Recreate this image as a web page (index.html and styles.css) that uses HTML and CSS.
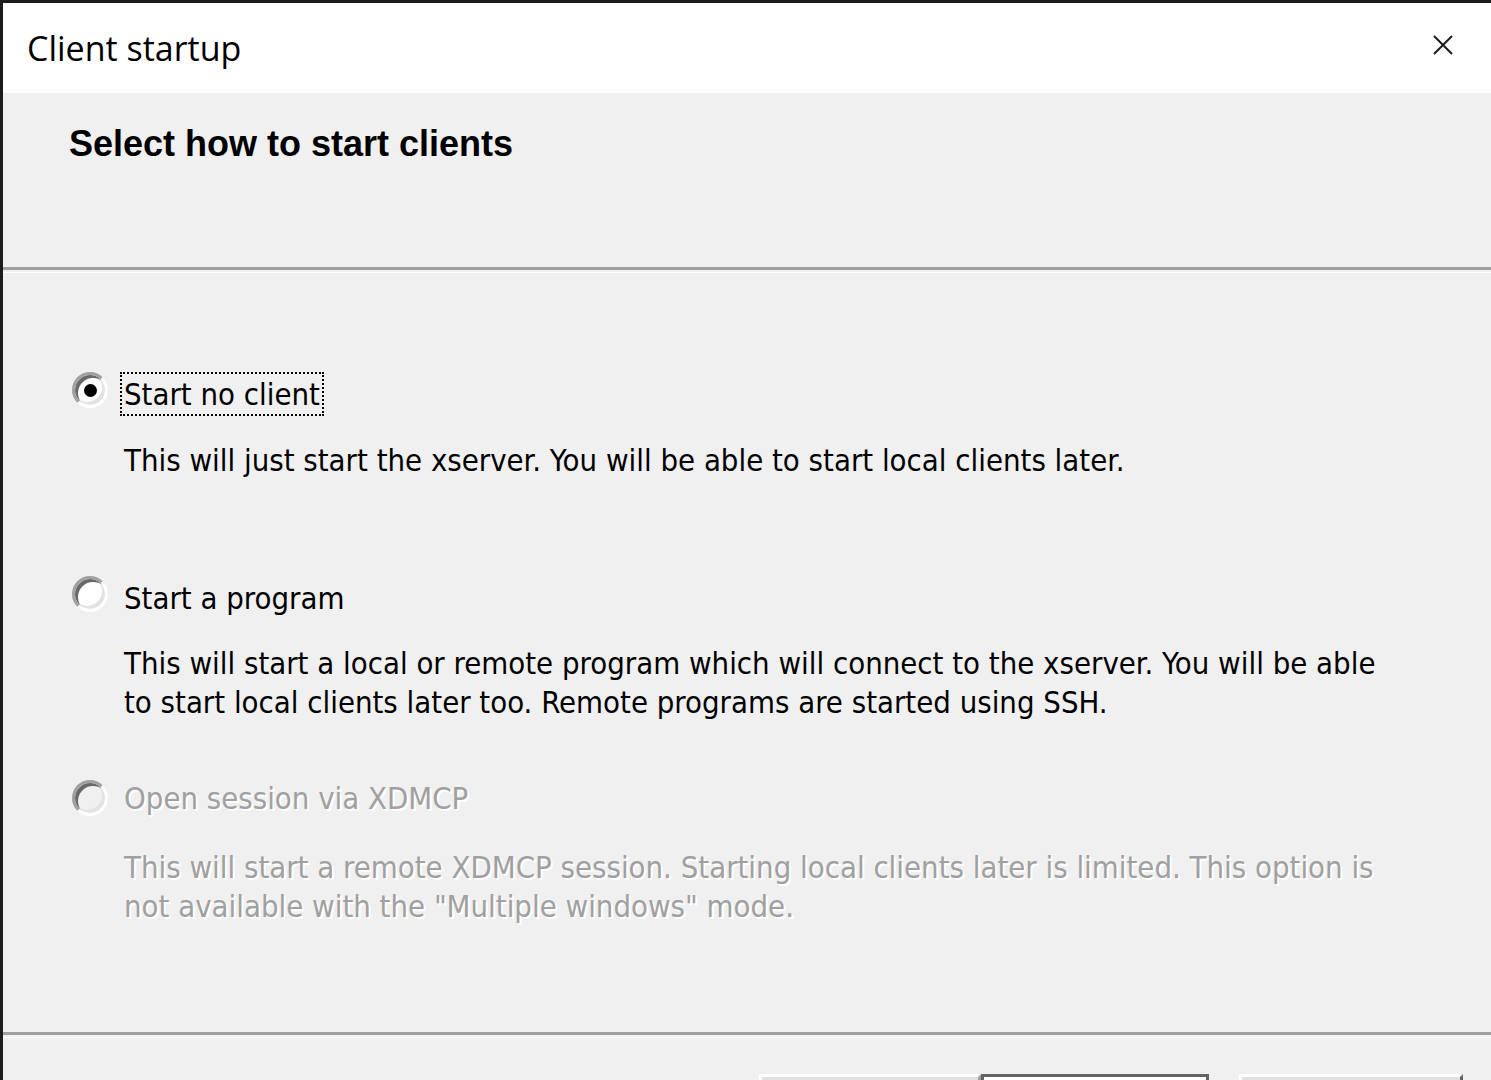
FILE: index.html
```html
<!DOCTYPE html>
<html>
<head>
<meta charset="utf-8">
<title>Client startup</title>
<link rel="stylesheet" href="styles.css">
</head>
<body>
<div class="window">
  <div class="titlebar">
    <span class="title">Client startup</span>
    <svg class="close" width="20" height="20" viewBox="0 0 20 20"><path d="M1 1 L19 19 M19 1 L1 19" stroke="#1b1b1b" stroke-width="2" fill="none"/></svg>
  </div>
  <div class="header">
    <div class="heading">Select how to start clients</div>
  </div>
  <div class="sep"></div>
  <div class="content">
    <div class="option opt1">
      <span class="radio checked"><span class="dot"></span></span>
      <span class="label focus">Start no client</span>
    </div>
    <div class="desc d1">This will just start the xserver. You will be able to start local clients later.</div>

    <div class="option opt2">
      <span class="radio"></span>
      <span class="label">Start a program</span>
    </div>
    <div class="desc d2">This will start a local or remote program which will connect to the xserver. You will be able<br>to start local clients later too. Remote programs are started using SSH.</div>

    <div class="option opt3 disabled">
      <span class="radio"></span>
      <span class="label">Open session via XDMCP</span>
    </div>
    <div class="desc d3 disabled">This will start a remote XDMCP session. Starting local clients later is limited. This option is<br>not available with the "Multiple windows" mode.</div>
  </div>
  <div class="sep"></div>
  <div class="footer">
    <button class="btn btn-back">&lt; Back</button>
    <button class="btn btn-default">Next &gt;</button>
    <button class="btn btn-cancel">Cancel</button>
  </div>
</div>
</body>
</html>
```
FILE: styles.css
```css
html, body {
  margin: 0;
  padding: 0;
  background: #f0f0f0;
}
.window {
  width: 1488px;
  height: 1077px;
  border-top: 3px solid #1c1c1c;
  border-left: 3px solid #1c1c1c;
  background: #f0f0f0;
  overflow: hidden;
  display: flex;
  flex-direction: column;
}
.titlebar {
  height: 90px;
  flex: none;
  background: #fff;
  display: flex;
  align-items: center;
  justify-content: space-between;
  padding-left: 24px;
  padding-right: 38px;
}
.title {
  font-family: "Open Sans", "Noto Sans", sans-serif;
  font-size: 34px;
  color: #000;
  line-height: 46px;
}
.close {
  display: block;
  margin-top: -6px;
}
.header {
  height: 174px;
  flex: none;
  box-sizing: border-box;
  padding: 31px 0 0 66px;
}
.heading {
  font-family: "Liberation Sans", Arial, sans-serif;
  font-weight: bold;
  font-size: 36px;
  line-height: 40px;
  color: #000;
}
.sep {
  flex: none;
  height: 2px;
  border-top: 3px solid #a0a0a0;
  border-bottom: 1px solid #fff;
}
.content {
  height: 759px;
  flex: none;
  font-family: "DejaVu Sans Condensed", "DejaVu Sans", sans-serif;
  font-stretch: condensed;
  font-size: 30.8px;
  color: #000;
}
.option {
  display: flex;
  align-items: flex-start;
  padding-left: 69px;
  gap: 12px;
}
.opt1 { margin-top: 99px; }
.opt2 { margin-top: 96px; }
.opt3 { margin-top: 54px; }
.opt3 .radio { margin-top: 4px; }
.radio {
  flex: none;
  width: 36px;
  height: 36px;
  box-sizing: border-box;
  border-radius: 50%;
  border: 3px solid;
  border-color: #a0a0a0 #ffffff #ffffff #a0a0a0;
  background: #fff;
  box-shadow: inset 3px 3px 0 #696969, inset -3px -3px 0 #e3e3e3;
  display: flex;
  align-items: center;
  justify-content: center;
}
.disabled .radio {
  background: #f0f0f0;
}
.dot {
  width: 13px;
  height: 13px;
  border-radius: 50%;
  background: #000;
}
.label {
  line-height: 40px;
  padding: 0 2px;
  border: 2px solid transparent;
  white-space: nowrap;
}
.label.focus {
  border: 2px dotted #000;
}
.desc {
  margin-left: 121px;
  line-height: 39px;
  white-space: nowrap;
}
.d1 { margin-top: 25px; }
.d2 { margin-top: 24px; }
.d3 { margin-top: 28px; }
.disabled .label, .desc.disabled {
  color: #a0a0a0;
  text-shadow: 2px 2px 0 #fff;
}
.footer {
  flex: none;
  display: flex;
  justify-content: flex-end;
  align-items: flex-start;
  padding: 36px 28px 0 0;
}
.btn {
  height: 90px;
  box-sizing: border-box;
  background: #e1e1e1;
  font-family: "DejaVu Sans", sans-serif;
  font-size: 28px;
  line-height: 34px;
  color: #000;
  padding: 30px 0 0;
  margin: 0;
  display: flex;
  justify-content: center;
  align-items: flex-start;
}
.btn-back {
  width: 222px;
  border: 3px solid;
  border-color: #fff #a0a0a0 #a0a0a0 #fff;
}
.btn-default {
  width: 228px;
  border: 3px solid #646464;
  box-shadow: inset 0 0 0 3px #fff;
  background: #f0f0f0;
}
.btn-cancel {
  width: 224px;
  margin-left: 30px;
  border: 3px solid;
  border-color: #fff #646464 #646464 #fff;
}
```
